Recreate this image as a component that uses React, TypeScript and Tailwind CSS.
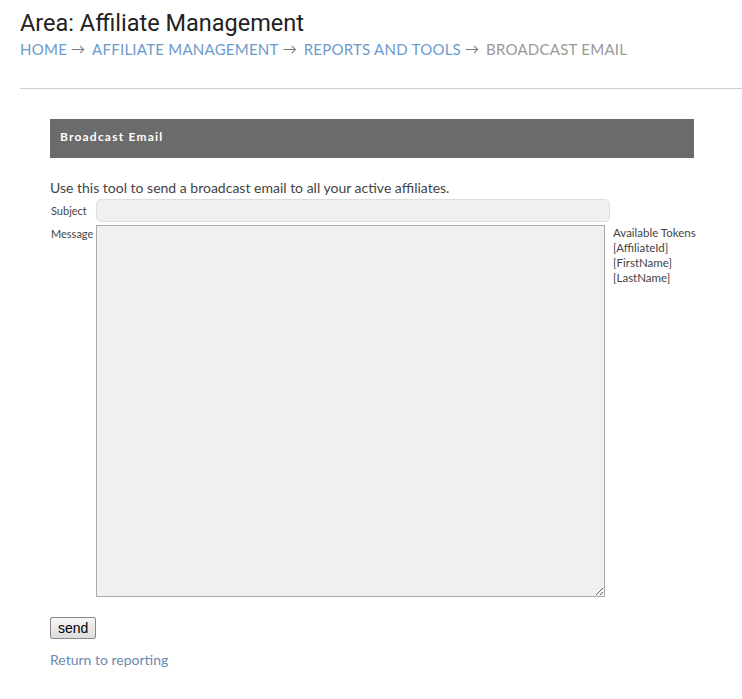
export default function App() {
  const lato = { fontFamily: "Lato, 'Open Sans', sans-serif" };
  return (
    <div className="min-h-[699px] w-[742px] bg-white text-[#444]" style={lato}>
      {/* Page title + breadcrumbs */}
      <div className="px-5 pt-[7px]">
        <h1 className="text-[23.5px] leading-[32px] text-[#222]" style={{ fontFamily: "Roboto, 'Noto Sans', sans-serif" }}>
          Area: Affiliate Management
        </h1>
        <div className="flex items-center text-[15px] leading-5 tracking-[0.25px] uppercase">
          <a className="text-[#6b9acb]">Home</a>
          <span className="ml-[4px] mr-[7px] text-[14px] tracking-normal text-[#777]">→</span>
          <a className="text-[#6b9acb]">Affiliate Management</a>
          <span className="ml-[4px] mr-[7px] text-[14px] tracking-normal text-[#777]">→</span>
          <a className="text-[#6b9acb]">Reports and Tools</a>
          <span className="ml-[4px] mr-[7px] text-[14px] tracking-normal text-[#777]">→</span>
          <span className="text-[#999]">Broadcast Email</span>
        </div>
      </div>
      <div className="ml-5 mt-[29px] h-px bg-[#cfcfcf]" />

      {/* Content */}
      <div className="px-[50px] pt-[30px]">
        <div className="flex h-[39px] w-[644px] items-center bg-[#6b6b6b] px-[10px] pb-[3px]">
          <span className="text-[12px] font-bold tracking-[1.2px] text-white">Broadcast Email</span>
        </div>

        <p className="mt-[21px] text-[14px] leading-[18px] text-[#444]">
          Use this tool to send a broadcast email to all your active affiliates.
        </p>

        <div className="mt-[2px] flex items-center text-[11px] text-[#444]">
          <span className="w-[46px] shrink-0 pl-px pt-[2px]">Subject</span>
          <input
            type="text"
            className="h-[23px] w-[514px] shrink-0 rounded-[5px] border border-[#ddd] bg-[#f0f0f0] px-2 outline-none"
          />
        </div>

        <div className="mt-[3px] flex items-start text-[#444]">
          <span className="w-[46px] shrink-0 pl-px pt-[1px] text-[11px] leading-[15px]">Message</span>
          <textarea className="h-[372px] w-[509px] shrink-0 resize border border-[#aaa] bg-[#f0f0f0] outline-none" />
          <div className="ml-2 whitespace-nowrap text-[11.5px] leading-[15px]">
            <div>Available Tokens</div>
            <div>[AffiliateId]</div>
            <div>[FirstName]</div>
            <div>[LastName]</div>
          </div>
        </div>

        <button
          className="mt-5 h-[22px] rounded-[2px] border border-[#888] bg-gradient-to-b from-[#f6f6f6] to-[#dcdcdc] px-[7px] text-[14px] leading-none text-black"
          style={{ fontFamily: "Arial, 'Liberation Sans', sans-serif" }}
        >
          send
        </button>

        <div className="mt-[8px]">
          <a className="text-[14px] text-[#6b8bb0]">Return to reporting</a>
        </div>
      </div>
    </div>
  );
}
